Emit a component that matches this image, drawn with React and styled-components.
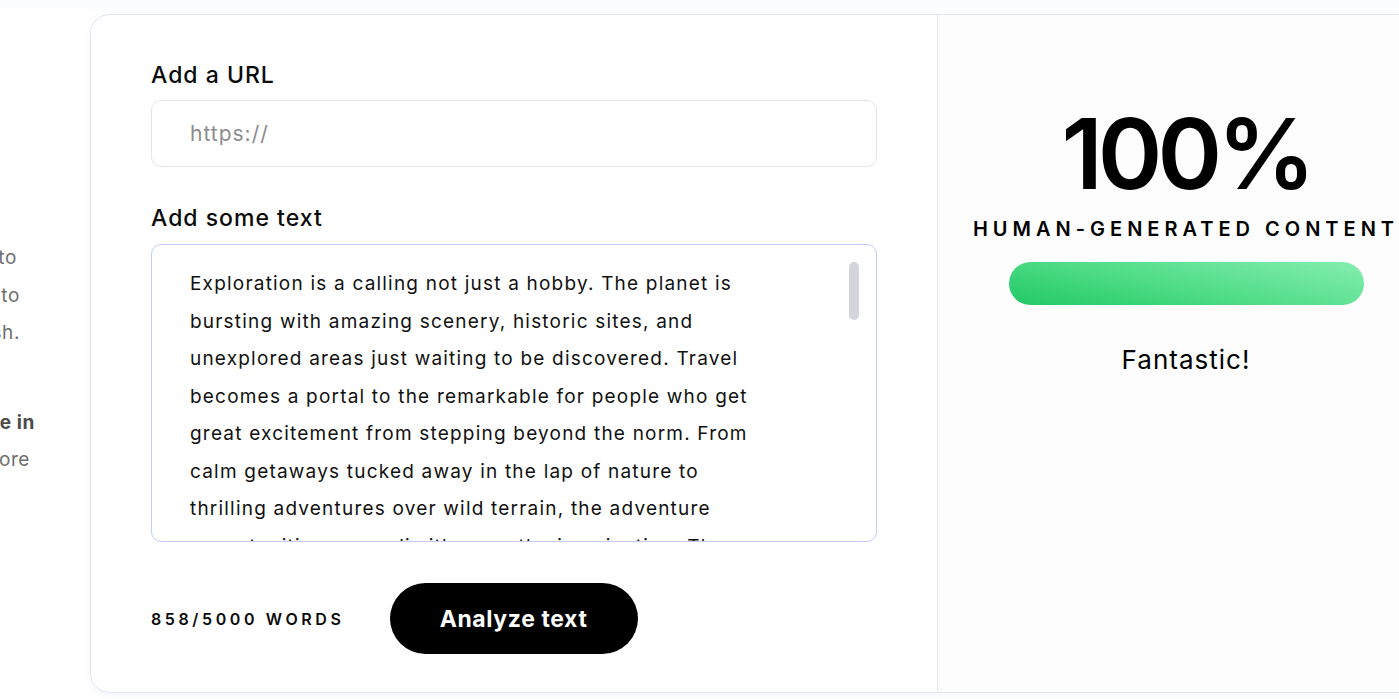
import React from "react";
import styled, { createGlobalStyle } from "styled-components";

const FONT = `"Inter", "Noto Sans", sans-serif`;

const Global = createGlobalStyle`
  html, body { margin: 0; padding: 0; background: #ffffff; }
  body { font-family: ${FONT}; overflow: hidden; }
  * { box-sizing: border-box; }
`;

const Page = styled.div`
  display: flex;
  align-items: flex-start;
  width: 1399px;
  height: 699px;
  overflow: hidden;
  padding-top: 14px;
  background: linear-gradient(#fafbff 0px, #ffffff 14px);
`;

const Side = styled.div`
  flex: 0 0 90px;
  overflow: hidden;
  padding-top: 225px;
  display: flex;
  flex-direction: column;
`;

const SideLine = styled.div`
  display: flex;
  justify-content: flex-end;
  padding-right: ${(p) => p.$pad}px;
  font-size: 19px;
  line-height: 37.5px;
  letter-spacing: 0.6px;
  color: ${(p) => (p.$bold ? "#4b4b4b" : "#6e6e6e")};
  font-weight: ${(p) => (p.$bold ? 700 : 400)};
  margin-top: ${(p) => p.$gap || 0}px;
  & > span { white-space: nowrap; flex-shrink: 0; }
`;

const Card = styled.div`
  flex: 0 0 1400px;
  height: 679px;
  display: flex;
  border: 1px solid #e3e6f3;
  border-radius: 20px;
  background: #fff;
  box-shadow: 0 2px 8px rgba(120, 130, 180, 0.08);
  overflow: hidden;
`;

const LeftPanel = styled.div`
  flex: 0 0 847px;
  padding: 45px 60px 0 60px;
  border-right: 1px solid #e8e9ee;
  display: flex;
  flex-direction: column;
`;

const Label = styled.label`
  font-size: 23px;
  line-height: 30px;
  font-weight: 500;
  letter-spacing: 1px;
  color: #0b0b0b;
  margin-top: ${(p) => p.$mt || 0}px;
  margin-bottom: ${(p) => p.$mb}px;
`;

const UrlInput = styled.input`
  height: 67px;
  width: 100%;
  border: 1px solid #e3e5ea;
  border-radius: 10px;
  padding: 0 38px;
  font-family: ${FONT};
  font-size: 21px;
  letter-spacing: 1px;
  color: #222;
  outline: none;
  &::placeholder { color: #8c8c8c; }
`;

const AreaWrap = styled.div`
  position: relative;
  height: 298px;
`;

const TextArea = styled.textarea`
  display: block;
  height: 100%;
  width: 100%;
  resize: none;
  border: 1px solid #c3cbfb;
  border-radius: 10px;
  padding: 20px 105px 0 38px;
  font-family: ${FONT};
  font-size: 19px;
  letter-spacing: 1.2px;
  line-height: 37.5px;
  color: #111;
  outline: none;
  overflow-y: hidden;
`;

const Thumb = styled.div`
  position: absolute;
  top: 18px;
  right: 18px;
  width: 10px;
  height: 58px;
  border-radius: 5px;
  background: #d4d5da;
`;

const Footer = styled.div`
  display: flex;
  align-items: center;
  gap: 45px;
  margin-top: 41px;
`;

const WordCount = styled.span`
  font-size: 16px;
  font-weight: 600;
  letter-spacing: 3.6px;
  color: #0b0b0b;
`;

const AnalyzeButton = styled.button`
  width: 248px;
  height: 71px;
  border: none;
  border-radius: 36px;
  background: #000;
  color: #fff;
  font-family: ${FONT};
  font-size: 23px;
  letter-spacing: 0.6px;
  font-weight: 700;
  cursor: pointer;
`;

const RightPanel = styled.div`
  flex: 0 0 496px;
  background: #fdfdfd;
  display: flex;
  flex-direction: column;
  align-items: center;
  padding-top: 89px;
`;

const Score = styled.div`
  font-size: 98px;
  font-weight: 600;
  line-height: 100px;
  color: #000;
  letter-spacing: -5px;
`;

const Verdict = styled.div`
  margin-top: 13px;
  font-size: 20px;
  line-height: 24px;
  font-weight: 600;
  letter-spacing: 5px;
  color: #000;
  white-space: nowrap;
`;

const Bar = styled.div`
  margin-top: 21px;
  width: 355px;
  height: 43px;
  border-radius: 22px;
  background: linear-gradient(12deg, #22c866 0%, #4fdc86 45%, #86eeb0 100%);
`;

const Remark = styled.div`
  margin-top: 39px;
  font-size: 26px;
  line-height: 32px;
  letter-spacing: 1px;
  font-weight: 400;
  color: #000;
`;

const TEXT = `Exploration is a calling not just a hobby. The planet is bursting with amazing scenery, historic sites, and unexplored areas just waiting to be discovered. Travel becomes a portal to the remarkable for people who get great excitement from stepping beyond the norm. From calm getaways tucked away in the lap of nature to thrilling adventures over wild terrain, the adventure opportunities are as limitless as the imagination. The thrill of seeing a new horizon for the first time, of hearing a language you do not yet understand, and of tasting food cooked in ways you have never imagined is something that stays with a traveler forever. Every journey leaves its mark, shaping the way we see the world and the people in it. Some travelers seek the silence of mountain peaks where the air is thin and the views stretch for miles. Others prefer the energy of crowded markets, narrow alleys, and city streets that never sleep. Whatever the destination, the spirit of adventure remains the same: a desire to learn, to grow, and to connect with something larger than ourselves.`;

export default function App() {
  return (
    <>
      <Global />
      <Page>
        <Side>
          <SideLine $pad={73}><span>Our detector was trained to</span></SideLine>
          <SideLine $pad={70}><span>accurately detect and help you to</span></SideLine>
          <SideLine $pad={70}><span>verify texts written in English.</span></SideLine>
          <SideLine $pad={55} $bold $gap={52}><span>Human content made in</span></SideLine>
          <SideLine $pad={60}><span>minutes and more</span></SideLine>
        </Side>
        <Card>
          <LeftPanel>
            <Label htmlFor="url" $mb={10}>Add a URL</Label>
            <UrlInput id="url" placeholder="https://" />
            <Label htmlFor="txt" $mt={36} $mb={11}>Add some text</Label>
            <AreaWrap>
              <TextArea id="txt" defaultValue={TEXT} />
              <Thumb />
            </AreaWrap>
            <Footer>
              <WordCount>858/5000 WORDS</WordCount>
              <AnalyzeButton>Analyze text</AnalyzeButton>
            </Footer>
          </LeftPanel>
          <RightPanel>
            <Score>100%</Score>
            <Verdict>HUMAN-GENERATED CONTENT</Verdict>
            <Bar />
            <Remark>Fantastic!</Remark>
          </RightPanel>
        </Card>
      </Page>
    </>
  );
}
